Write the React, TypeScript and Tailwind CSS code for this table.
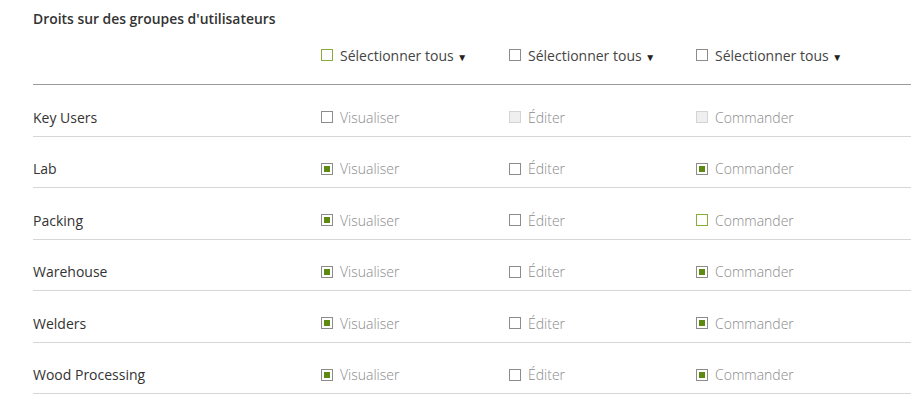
type BoxState = "off" | "on" | "disabled" | "focus";

const rows: { name: string; boxes: [BoxState, BoxState, BoxState] }[] = [
  { name: "Key Users", boxes: ["off", "disabled", "disabled"] },
  { name: "Lab", boxes: ["on", "off", "on"] },
  { name: "Packing", boxes: ["on", "off", "focus"] },
  { name: "Warehouse", boxes: ["on", "off", "on"] },
  { name: "Welders", boxes: ["on", "off", "on"] },
  { name: "Wood Processing", boxes: ["on", "off", "on"] },
];

const labels = ["Visualiser", "Éditer", "Commander"];
const colWidths = ["w-[188px]", "w-[187px]", "w-[188px]"];

function Box({ state }: { state: BoxState }) {
  if (state === "disabled") {
    return <span className="block h-[12px] w-[12px] shrink-0 border border-[#d4d4d4] bg-[#efefef]" />;
  }
  if (state === "focus") {
    return <span className="block h-[12px] w-[12px] shrink-0 border border-[#8aab3c] bg-white" />;
  }
  return (
    <span className="flex h-[12px] w-[12px] shrink-0 items-center justify-center border border-[#8c8c8c] bg-white">
      {state === "on" && <span className="block h-[6px] w-[6px] bg-[#5f8a12]" />}
    </span>
  );
}

export default function App() {
  return (
    <div
      className="min-h-[406px] bg-white pl-[33px] pt-[10px] text-[#333]"
      style={{ fontFamily: "'Open Sans', 'Liberation Sans', sans-serif" }}
    >
      <h2 className="text-[13.9px] font-semibold leading-[18px] text-[#333]">
        Droits sur des groupes d'utilisateurs
      </h2>

      <div className="flex h-[57px] items-center border-b border-[#9a9a9a] pb-[2px]">
        <div className="w-[288px]" />
        {["focus", "off", "off"].map((s, i) => (
          <div key={i} className={`flex items-center gap-[7px] ${colWidths[i]}`}>
            <Box state={s as BoxState} />
            <span className="text-[14px] text-[#444]">
              Sélectionner tous <span className="text-[10px] text-[#222]">▼</span>
            </span>
          </div>
        ))}
      </div>

      {rows.map((row) => (
        <div
          key={row.name}
          className="flex h-[51.5px] items-center border-b border-[#d6d6d6] pt-[14px]"
        >
          <div className="w-[288px] text-[14px] text-[#333]">{row.name}</div>
          {row.boxes.map((b, i) => (
            <div key={i} className={`flex items-center gap-[7px] ${colWidths[i]}`}>
              <Box state={b} />
              <span className="text-[14px] font-light text-[#8a8a8a]">{labels[i]}</span>
            </div>
          ))}
        </div>
      ))}
    </div>
  );
}
